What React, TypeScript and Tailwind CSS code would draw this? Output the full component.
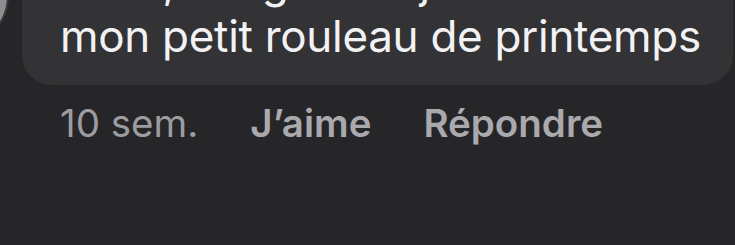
export default function App() {
  return (
    <div className="w-[735px] h-[245px] bg-[#262628] overflow-hidden flex font-['Inter','Liberation_Sans',sans-serif]">
      {/* avatar, mostly scrolled off */}
      <div className="w-[22px] shrink-0">
        <div className="w-[108px] h-[108px] -ml-[99px] -mt-[59px] rounded-full bg-[#8e8e90] border-2 border-[#3a3a3c]" />
      </div>

      <div className="flex flex-col">
        <div className="w-[711px] -mt-[65px] pt-[20px] pb-[22px] px-[38px] rounded-[30px] bg-[#333335] text-[#f2f2f4] text-[44px] leading-[54px] tracking-[-0.3px]">
          <p className="whitespace-nowrap">Salut, ma gazelle jolie</p>
          <p className="whitespace-nowrap">mon petit rouleau de printemps</p>
        </div>

        <div className="flex items-baseline gap-[52px] pl-[38px] mt-[16px] text-[38.5px] leading-[44px]">
          <span className="text-[#9c9ca1]">10 sem.</span>
          <span className="font-semibold text-[#a9a9ae]">J’aime</span>
          <span className="font-semibold text-[#a9a9ae]">Répondre</span>
        </div>
      </div>
    </div>
  );
}
